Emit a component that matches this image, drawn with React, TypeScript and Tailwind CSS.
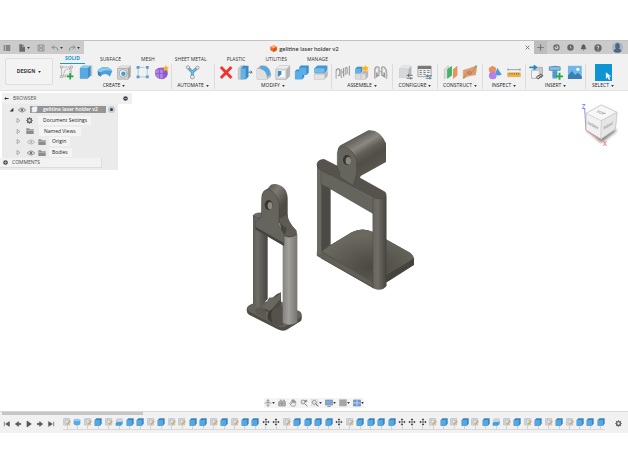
import React from "react";

type IconName =
  | "sketch" | "extrude" | "revolve" | "hole" | "pattern" | "form" | "automate"
  | "delete" | "presspull" | "fillet" | "shell" | "combine" | "split"
  | "joint" | "component" | "rigid" | "config" | "table" | "plane" | "surface"
  | "inspect" | "measure" | "link" | "fastener" | "image" | "select";

const art: Record<IconName, React.ReactNode> = {
  sketch: (
    <>
      <path d="M8 8H38V38H8Z" fill="none" stroke="#999" strokeWidth="2" />
      <path d="M14 34L18 18L34 12V32Z" fill="none" stroke="#777" strokeWidth="2" strokeDasharray="4 2" />
      <path d="M4 5h6v6H4zM36 5h6v6h-6zM4 35h6v6H4z" fill="#fff" stroke="#777" strokeWidth="1.5" />
      <path d="M35 27V47M25 37H45" stroke="#22a546" strokeWidth="5" />
    </>
  ),
  extrude: (
    <>
      <path d="M6 11L15 4H40V34L31 44H6Z" fill="#3f8fc9" />
      <path d="M6 11L15 4H40L31 11Z" fill="#8ccaf0" />
      <path d="M6 11H31V44H6Z" fill="#5aaae2" />
      <path d="M43 3V36" stroke="#999" strokeWidth="2" />
    </>
  ),
  revolve: (
    <>
      <path d="M2 22C6 3 40 3 48 20L40 38C32 27 18 27 11 38Z" fill="#4b9fda" />
      <path d="M2 21C10 5 37 4 47 20C34 16 19 17 12 25Z" fill="#8ac8ef" />
      <path d="M2 22L12 25L11 38L3 33Z" fill="#3a87bf" />
    </>
  ),
  hole: (
    <>
      <path d="M5 12L13 4H46V37L38 46H5Z" fill="#a5a5a5" />
      <path d="M5 12L13 4H46L38 12Z" fill="#e1e1e1" />
      <path d="M5 12H38V46H5Z" fill="#d2d2d2" stroke="#888" />
      <circle cx="22" cy="28" r="12" fill="#f8f8f8" stroke="#888" strokeWidth="2" />
      <circle cx="23" cy="29" r="7" fill="#489bd3" />
    </>
  ),
  pattern: (
    <>
      <path d="M10 9V39H38M10 9H30M38 39V10" fill="none" stroke="#aaa" strokeWidth="2" />
      <path d="M5 5H14V13H5ZM34 5H43V13H34ZM5 34H14V43H5ZM34 34H43V43H34Z" fill="#4f9fd8" />
    </>
  ),
  form: (
    <>
      <path d="M4 17Q15 7 31 10Q44 14 43 28Q42 43 26 46Q8 45 4 33Z" fill="#9060cf" />
      <path d="M4 18Q17 11 30 18V44Q14 45 5 36Z" fill="#b083e6" />
      <path d="M4 29Q20 26 42 30M17 14V44M30 18V44" fill="none" stroke="#7a50b5" strokeWidth="2" />
      <path d="M37 1L40 8L47 9L42 14L43 21L37 17L30 21L32 14L27 9L34 8Z" fill="#ffb31a" />
    </>
  ),
  automate: (
    <>
      <path d="M10 10L23 24L38 11M23 24V38" fill="none" stroke="#4f98c4" strokeWidth="9" />
      <path d="M10 10L23 24L38 11M23 24V38" fill="none" stroke="#6db8e6" strokeWidth="5" />
      <circle cx="9" cy="9" r="5" fill="#eee" stroke="#777" strokeWidth="2" />
      <circle cx="39" cy="10" r="5" fill="#eee" stroke="#777" strokeWidth="2" />
      <circle cx="23" cy="39" r="6" fill="#eee" stroke="#777" strokeWidth="2" />
    </>
  ),
  delete: <path d="M9 8L42 42M42 8L9 42" stroke="#ef3434" strokeWidth="9" />,
  presspull: (
    <>
      <path d="M4 12L12 4H25V38L17 46H4Z" fill="#c7cdd1" stroke="#8c9499" />
      <path d="M12 12L20 4H36V38L28 46H12Z" fill="#3a8bc3" />
      <path d="M12 12H27V46H12Z" fill="#65b2e7" />
      <path d="M35 24H47M42 19L47 24L42 29" fill="none" stroke="#555" strokeWidth="2.5" />
    </>
  ),
  fillet: (
    <>
      <path d="M3 14L14 4H26Q43 8 46 31V37L35 46H3Z" fill="#b7b7b7" stroke="#888" />
      <path d="M3 14H15Q33 17 35 46H3Z" fill="#e0e0e0" />
      <path d="M14 5H26Q42 9 46 31L35 38Q32 18 14 14Z" fill="#56a9e0" />
    </>
  ),
  shell: (
    <>
      <path d="M3 14L13 4H46V36L36 46H3Z" fill="#b5b5b5" stroke="#888" />
      <path d="M3 14L13 4H46L36 14Z" fill="#ececec" />
      <path d="M3 14H36V46H3Z" fill="#dedede" stroke="#999" />
      <path d="M9 20H30V39H9Z" fill="#fff" />
      <path d="M9 20H20V31L9 39Z" fill="#398cc5" />
    </>
  ),
  combine: (
    <>
      <path d="M16 9L21 3H46V26L39 33H32V40L26 46H3V21L8 16H16Z" fill="#388fce" />
      <path d="M16 9H39V33H26V46H3V21H16Z" fill="#5bade5" />
    </>
  ),
  split: (
    <>
      <path d="M4 12L14 3H45V17L36 27H4Z" fill="#4398d2" />
      <path d="M4 12H36V26H4Z" fill="#70bceb" />
      <path d="M4 31L10 28H36L45 20V36L36 46H4Z" fill="#b9b9b9" stroke="#999" />
      <path d="M4 31H36V46H4Z" fill="#e4e4e4" />
    </>
  ),
  joint: (
    <>
      <path d="M4 44V20Q4 14 10 14Q16 14 15 22V33L9 35" fill="none" stroke="#999" strokeWidth="4" />
      <path d="M20 42V15M27 38V11M20 26L27 21" stroke="#999" strokeWidth="4" />
      <path d="M33 33V11Q36 6 38 12V30M45 4V34" fill="none" stroke="#a5a5a5" strokeWidth="4" />
      <path d="M5 43V20M21 40V16M34 31V12" stroke="#ddd" strokeWidth="2" />
    </>
  ),
  component: (
    <>
      <path d="M4 13L10 7H26V22L20 28H4Z" fill="#3f90cb" />
      <path d="M4 13H21V27H4Z" fill="#62b2e8" />
      <path d="M4 29H22V46H4Z" fill="#ddd" stroke="#999" />
      <path d="M23 29L29 22H43V38L36 46H23Z" fill="#b7b7b7" stroke="#888" />
      <path d="M23 29H36V46H23Z" fill="#ddd" />
      <path d="M35 1L38 8L46 7L42 13L46 19L38 18L35 25L32 18L24 19L28 13L24 7L32 8Z" fill="#ffb41c" />
    </>
  ),
  rigid: (
    <>
      <path d="M6 44V17Q8 4 18 9V33L12 37V25M42 44V22Q37 4 28 9V33L35 37V25" fill="none" stroke="#999" strokeWidth="5" />
      <path d="M7 42V18Q9 6 17 10V32M41 42V22Q36 6 29 10V32" fill="none" stroke="#dcdcdc" strokeWidth="2" />
      <path d="M20 19L27 26" stroke="#999" strokeWidth="3" />
    </>
  ),
  config: (
    <>
      <path d="M4 13L14 4H42V33L34 42H4Z" fill="#b5b5b5" />
      <path d="M4 13L14 4H42L34 13Z" fill="#e6e6e6" />
      <path d="M4 13H33V42H4Z" fill="#d8d8d8" />
      <path d="M27 34H46M27 43H46M33 29V38M40 39V47" fill="none" stroke="#596772" strokeWidth="2.5" />
    </>
  ),
  table: (
    <>
      <path d="M3 5H44V38H3Z" fill="#f2f2f2" stroke="#777" strokeWidth="2" />
      <path d="M3 5H44V14H3Z" fill="#777" />
      <path d="M8 19H15M20 19H27M32 19H39M8 25H15M20 25H27M32 25H39M8 31H15M20 31H27" stroke="#777" strokeWidth="3" />
      <path d="M27 35H46M27 43H46M33 31V39M40 39V47" stroke="#506b7f" strokeWidth="2.5" />
    </>
  ),
  plane: (
    <>
      <path d="M4 15L17 4V34L4 45Z" fill="#dedede" stroke="#999" />
      <path d="M13 15L28 4V34L13 45Z" fill="#42b469" />
      <path d="M31 15L45 4V34L31 45Z" fill="#e69461" />
    </>
  ),
  surface: (
    <>
      <path d="M4 18Q20 14 45 4Q47 17 42 33Q25 33 4 43Z" fill="#e79a65" stroke="#c47b4f" />
      <path d="M5 41L18 25L29 28L44 6" fill="none" stroke="#8a8a8a" strokeWidth="2" />
      <circle cx="6" cy="41" r="3" fill="#45b869" /><circle cx="44" cy="6" r="3" fill="#45b869" />
      <circle cx="24" cy="26" r="5" fill="none" stroke="#777" strokeWidth="2" />
    </>
  ),
  inspect: (
    <>
      <path d="M32 10L46 31Q36 37 25 31Z" fill="#4c9dd6" />
      <path d="M6 11L17 4L28 10V22L17 27L6 22Z" fill="#e8915b" />
      <circle cx="18" cy="34" r="12" fill="#b083e6" />
    </>
  ),
  measure: (
    <>
      <path d="M6 16H44M6 12V20M44 12V20" stroke="#777" strokeWidth="2" />
      <path d="M5 26H45V38H5Z" fill="#efb33e" stroke="#bd892e" />
      <path d="M12 26V32M19 26V32M26 26V32M33 26V32M39 26V32" stroke="#795e31" strokeWidth="2" />
    </>
  ),
  link: (
    <>
      <path d="M8 19L20 9H42V34L34 43H8Z" fill="#c9c9c9" stroke="#999" strokeWidth="2" />
      <path d="M8 19H32V43H8Z" fill="#f3f3f3" stroke="#999" />
      <path d="M1 9H23M15 3L23 9L15 16" fill="none" stroke="#2786c6" strokeWidth="5" />
      <path d="M28 38L36 30L43 35L37 42M38 35L29 45L23 40L30 33" fill="none" stroke="#444" strokeWidth="3" />
    </>
  ),
  fastener: (
    <>
      <path d="M4 9Q20 0 38 8V19H29V44H14V19H4Z" fill="#579fce" />
      <path d="M4 7H38V18H4ZM14 26H29M14 34H29" fill="#86bfe1" stroke="#4686af" strokeWidth="2" />
      <path d="M36 26V48M25 37H47" stroke="#24a947" strokeWidth="6" />
    </>
  ),
  image: (
    <>
      <path d="M3 4H46V45H3Z" fill="#6fb9ea" />
      <path d="M3 34L15 20L26 33L34 26L46 37V45H3Z" fill="#377fb5" />
      <circle cx="34" cy="15" r="5" fill="#fff" />
    </>
  ),
  select: (
    <>
      <path d="M0 0H50V50H0Z" fill="#0c93d8" />
      <path d="M4 5H44V30H4Z" fill="none" stroke="#2fae8c" strokeWidth="1.5" strokeDasharray="3 2" />
      <path d="M32 24V44L37 39L41 47L45 45L41 37H48Z" fill="#fff" />
    </>
  ),
};

const groups: { label: string; icons: IconName[] }[] = [
  { label: "CREATE", icons: ["sketch", "extrude", "revolve", "hole", "pattern", "form"] },
  { label: "AUTOMATE", icons: ["automate"] },
  { label: "MODIFY", icons: ["delete", "presspull", "fillet", "shell", "combine", "split"] },
  { label: "ASSEMBLE", icons: ["joint", "component", "rigid"] },
  { label: "CONFIGURE", icons: ["config", "table"] },
  { label: "CONSTRUCT", icons: ["plane", "surface"] },
  { label: "INSPECT", icons: ["inspect", "measure"] },
  { label: "INSERT", icons: ["link", "fastener", "image"] },
  { label: "SELECT", icons: ["select"] },
];

const tabs = ["SOLID", "SURFACE", "MESH", "SHEET METAL", "PLASTIC", "UTILITIES", "MANAGE"];

function Caret() {
  return (
    <svg viewBox="0 0 4 3" className="h-[2px] w-[3px] shrink-0" aria-hidden="true">
      <path d="M0 0H4L2 3Z" fill="#333" />
    </svg>
  );
}

function Glyph({ children, size = "size-2" }: { children: React.ReactNode; size?: string }) {
  return (
    <svg viewBox="0 0 24 24" className={`${size} shrink-0`} aria-hidden="true">
      {children}
    </svg>
  );
}

function Gear() {
  return (
    <Glyph size="size-[7px]">
      <circle cx="12" cy="12" r="6.5" fill="none" stroke="#6a6a6a" strokeWidth="5" />
      <path d="M12 1V5M12 19V23M1 12H5M19 12H23M4 4L7 7M17 17L20 20M20 4L17 7M4 20L7 17" stroke="#6a6a6a" strokeWidth="4" />
    </Glyph>
  );
}

function TitleBar() {
  return (
    <div className="flex h-[14px] border-t border-[#c2c2c2] bg-[#cbcbcb]">
      <div className="flex w-[84px] shrink-0 items-center pl-[3px]">
        <button aria-label="Data panel" className="mr-[7px]">
          <Glyph><path d="M2 4H7V8H2ZM9 4H22V8H9ZM2 10H7V14H2ZM9 10H22V14H9ZM2 16H7V20H2ZM9 16H22V20H9Z" fill="#707070" /></Glyph>
        </button>
        <button aria-label="File" className="mr-[7px] flex items-center gap-px">
          <Glyph><path d="M4 1H14L21 8V23H4Z" fill="#6b6b6b" /><path d="M14 1V8H21" stroke="#ccc" fill="none" strokeWidth="2" /></Glyph>
          <Caret />
        </button>
        <button aria-label="Save" className="mr-[6px]">
          <Glyph><path d="M3 3H21V21H3ZM7 3V10H17V3M7 21V14H17V21" stroke="#8c8c8c" strokeWidth="2.5" fill="none" /></Glyph>
        </button>
        <button aria-label="Undo" className="mr-[5px] flex items-center gap-px">
          <Glyph><path d="M9 4L3 10L9 16M3 10H14Q21 11 20 20" stroke="#8e8e8e" strokeWidth="3" fill="none" /></Glyph>
          <Caret />
        </button>
        <button aria-label="Redo" className="flex items-center gap-px">
          <Glyph><path d="M15 4L21 10L15 16M21 10H10Q3 11 4 20" stroke="#8e8e8e" strokeWidth="3" fill="none" /></Glyph>
          <Caret />
        </button>
      </div>
      <div className="flex flex-1 items-center bg-[#f1f1f1] pr-1">
        <div className="flex flex-1 items-center justify-center gap-[2px] pt-[2px] font-['Lato','Open_Sans',sans-serif] text-[6px] leading-[8px] font-medium text-[#333]">
          <svg viewBox="0 0 24 24" className="size-[7px]" aria-hidden="true">
            <path d="M1 6L13 1L23 6V18L12 24L1 18Z" fill="#ef6a28" />
            <path d="M1 6L13 1L23 6L12 12Z" fill="#ffac70" />
            <path d="M12 12L23 6V18L12 24Z" fill="#d95216" />
          </svg>
          <h1>gelitine laser holder v2</h1>
        </div>
        <button aria-label="Close tab">
          <Glyph size="size-[5px]"><path d="M3 3L21 21M21 3L3 21" stroke="#666" strokeWidth="4" /></Glyph>
        </button>
      </div>
      <div className="flex w-[94px] shrink-0 items-center justify-between pr-[5px]">
        <button aria-label="New tab" className="flex h-full w-[13px] items-center justify-center bg-[#bdbdbd]">
          <Glyph size="size-[7px]"><path d="M12 1V23M1 12H23" stroke="#777" strokeWidth="4" /></Glyph>
        </button>
        <button aria-label="Extensions"><Glyph size="size-[7px]"><circle cx="12" cy="12" r="9" fill="none" stroke="#666" strokeWidth="4" /><path d="M3 8H12V14" fill="none" stroke="#666" strokeWidth="3" /></Glyph></button>
        <button aria-label="Job status"><Glyph size="size-[7px]"><circle cx="12" cy="12" r="11" fill="#666" /><path d="M12 6V13H17" fill="none" stroke="#ccc" strokeWidth="2.5" /></Glyph></button>
        <button aria-label="Notifications"><Glyph size="size-[7px]"><path d="M2 18Q5 15 5 9Q6 2 12 1Q18 2 19 9Q19 15 22 18ZM9 20H15L12 23Z" fill="#5c5c5c" /></Glyph></button>
        <button aria-label="Help"><Glyph><circle cx="12" cy="12" r="11" fill="#666" /><path d="M8 9Q9 5 13 6Q17 8 12 13V15M12 17V20" fill="none" stroke="#ddd" strokeWidth="2.5" /></Glyph></button>
        <button aria-label="Account" className="ml-1">
          <Glyph size="size-[11px]"><circle cx="12" cy="12" r="12" fill="#a9b5c3" /><ellipse cx="12" cy="9" rx="5" ry="7" fill="#4e6684" /><path d="M3 20Q5 14 12 15Q19 14 21 20Q12 27 3 20Z" fill="#4e6684" /></Glyph>
        </button>
      </div>
    </div>
  );
}

function Ribbon() {
  return (
    <div className="flex h-[37px] border-b border-[#e2e2e2] bg-[#f1f1f1]">
      <div className="w-[57px] shrink-0 pt-1 pl-[5px]">
        <button className="flex h-[27px] w-12 items-center justify-center gap-[3px] rounded-[2px] border border-[#dedede] bg-[#f3f3f3] text-[5px] font-bold text-[#333]">
          DESIGN <Caret />
        </button>
      </div>
      <div className="flex-1">
        <nav className="flex h-[10px] items-start gap-5 pl-2" aria-label="Workspace tabs">
          {tabs.map((t, i) => (
            <button
              key={t}
              className={
                i === 0
                  ? "-mx-[5px] h-[10px] border-b border-[#1c98d8] px-[5px] text-[5px] leading-[9px] font-bold text-[#1694d6]"
                  : "h-[10px] text-[5px] leading-[9px] font-medium text-[#333]"
              }
            >
              {t}
            </button>
          ))}
        </nav>
        <div className="grid grid-cols-[115fr_43fr_117fr_61fr_45fr_45fr_43fr_60fr_34fr] pr-2">
          {groups.map((g) => (
            <section key={g.label} className="flex h-[25px] flex-col items-center border-r border-[#dcdcdc] last:border-r-0">
              <div className="flex gap-[3px]">
                {g.icons.map((n) => (
                  <button key={n} aria-label={n}>
                    <svg viewBox="0 0 50 50" className={n === "select" ? "h-[17px] w-[17px]" : "h-[17px] w-4"} aria-hidden="true">{art[n]}</svg>
                  </button>
                ))}
              </div>
              <button className="flex items-center gap-[2px] text-[5px] leading-[9px] font-medium whitespace-nowrap text-[#222]">
                {g.label} <Caret />
              </button>
            </section>
          ))}
        </div>
      </div>
    </div>
  );
}

function Folder() {
  return <Glyph><path d="M1 4H9L11 7H23V21H1Z" fill="#8c8c8c" /><path d="M1 10H23" stroke="#ccc" strokeWidth="2" /></Glyph>;
}

function Eye({ dim = false }: { dim?: boolean }) {
  return (
    <Glyph>
      <path d="M1 12Q12 0 23 12Q12 24 1 12Z" fill="none" stroke={dim ? "#aaa" : "#777"} strokeWidth="2.5" />
      <circle cx="12" cy="12" r="4" fill={dim ? "#bbb" : "#777"} />
    </Glyph>
  );
}

function Twist() {
  return <Glyph size="size-[5px]"><path d="M5 2L19 12L5 22Z" fill="none" stroke="#888" strokeWidth="3" /></Glyph>;
}

function Browser() {
  return (
    <aside className="w-[132px] text-[5px] leading-[9px] font-medium text-[#222]">
      <header className="ml-[2px] flex h-[11px] items-center bg-[#f0f0f0] pr-1 pl-[2px]">
        <Glyph size="size-[5px]"><path d="M1 12L10 5V19ZM9 10H22V14H9Z" fill="#333" /></Glyph>
        <h2 className="ml-1 flex-1 text-[#555]">BROWSER</h2>
        <Glyph size="size-[5px]"><circle cx="12" cy="12" r="11" fill="#444" /><path d="M6 12H18" stroke="#ccc" strokeWidth="3" /></Glyph>
      </header>
      <div className="ml-[2px] w-[116px] bg-[#ebebeb] pt-px pb-px">
        <ul className="flex h-[52px] flex-col justify-between">
          <li className="flex h-[9px] items-center gap-1 pl-[7px]">
            <Glyph size="size-[5px]"><path d="M21 3V21H3Z" fill="#333" /></Glyph>
            <Eye />
            <span className="flex h-[7px] w-[76px] items-center gap-[5px] bg-[#959595] pl-px font-semibold text-white">
              <Glyph size="size-[7px]"><path d="M3 6L8 2H21V17L16 21H3Z" fill="#eef2f6" stroke="#ccd" strokeWidth="1" /></Glyph>
              gelitine laser holder v2
            </span>
            <input type="radio" aria-label="Activate component" defaultChecked className="-ml-[2px] size-[7px] appearance-none rounded-full border-2 border-[#c3cad1] bg-[#2e4359]" />
          </li>
          <li className="flex h-[9px] items-center gap-[5px] pl-[14px]">
            <Twist /><Gear /><span className="bg-[#f4f4f4] pr-1 pl-[5px]">Document Settings</span>
          </li>
          <li className="flex h-[9px] items-center gap-[5px] pl-[14px]">
            <Twist /><Folder /><span className="bg-[#f4f4f4] px-[5px]">Named Views</span>
          </li>
          <li className="flex h-[9px] items-center gap-[3px] pl-[14px]">
            <Twist /><span className="-mr-px w-px" /><Eye dim /><Folder /><span className="bg-[#f4f4f4] pr-1 pl-[3px]">Origin</span>
          </li>
          <li className="flex h-[9px] items-center gap-[3px] pl-[14px]">
            <Twist /><span className="-mr-px w-px" /><Eye /><Folder /><span className="bg-[#f4f4f4] pr-1 pl-[3px]">Bodies</span>
          </li>
        </ul>
      </div>
      <div className="h-3 w-[118px] bg-[#ebebeb]">
        <button className="flex h-[10px] w-[102px] items-center gap-1 border-r border-b border-[#ddd] bg-[#f2f2f2] pl-[3px] text-[#444]">
          <Glyph size="size-[5px]"><circle cx="12" cy="12" r="11" fill="#444" /><path d="M6 12H18M12 6V18" stroke="#ccc" strokeWidth="3" /></Glyph>
          COMMENTS
        </button>
      </div>
    </aside>
  );
}

function LeftModel() {
  return (
    <svg viewBox="0 0 240 495" className="absolute top-[84px] left-[235px] h-[165px] w-[80px]" aria-label="Clamp bracket body">
      <defs>
        <linearGradient id="colDark"><stop offset="0" stopColor="#5b5a55" /><stop offset=".3" stopColor="#6f6d68" /><stop offset="1" stopColor="#45443e" /></linearGradient>
        <linearGradient id="colLight"><stop offset="0" stopColor="#83827d" /><stop offset=".4" stopColor="#a09f9b" /><stop offset="1" stopColor="#76756f" /></linearGradient>
        <linearGradient id="lugSide" gradientUnits="userSpaceOnUse" x1="95" y1="30" x2="155" y2="75"><stop offset="0" stopColor="#55534c" /><stop offset=".45" stopColor="#7d7a72" /><stop offset="1" stopColor="#4d4b44" /></linearGradient>
      </defs>
      <path d="M35 402Q38 390 58 385L120 378L196 412Q204 422 198 438L154 465Q142 470 128 463L42 419Q34 414 35 402Z" fill="#4f4d47" />
      <path d="M36 400Q40 389 60 384L130 375L196 410Q204 420 194 428L152 454Q140 460 128 453L42 409Z" fill="#66635c" />
      <path d="M72 402L126 357L138 352V392L107 420Q96 405 72 402Z" fill="#4c4a45" />
      <path d="M72 402Q92 390 102 368L122 366L137 353V372L105 408Q90 397 72 402Z" fill="#6a6760" />
      <path d="M60 405Q75 392 90 406Q96 416 93 432L64 416Z" fill="#5b5952" />
      <path d="M96 435Q98 415 118 402L145 390V452L128 452Z" fill="#55524b" />
      <path d="M98 430Q95 412 113 402Q105 415 112 445Z" fill="#3d3b37" />
      <path d="M54 122Q76 106 98 125V372L75 395Q62 398 54 387Z" fill="url(#colDark)" />
      <path d="M54 122Q60 112 80 114V130Q62 132 54 122Z" fill="#6e6b64" stroke="#3d3b37" strokeWidth="1.5" />
      <path d="M143 176H187V442Q167 456 143 443Z" fill="url(#colLight)" />
      <path d="M80 60L108 29Q126 22 146 38Q158 50 158 70V124L134 146Z" fill="url(#lugSide)" />
      <path d="M133 132L158 118Q158 140 184 166Q190 178 176 184Q160 190 147 181L138 170Z" fill="#5d5b54" />
      <path d="M136 142Q140 152 153 158Q158 162 150 178L140 172Z" fill="#48463f" />
      <path d="M80 68Q82 42 102 43Q124 54 132 84V132Q130 154 147 178V212L62 163V138Q78 134 79 118Z" fill="#65655d" stroke="#45443e" strokeWidth="1.5" />
      <path d="M62 163L147 212V204L62 156Z" fill="#45443e" />
      <path d="M147 182Q167 192 186 177" fill="none" stroke="#403e39" strokeWidth="2" />
      <ellipse cx="101" cy="90" rx="12" ry="15" fill="#37352f" /><ellipse cx="105" cy="92" rx="7" ry="11" fill="#8b8980" />
    </svg>
  );
}

function RightModel() {
  return (
    <svg viewBox="0 0 360 540" className="absolute top-[29px] left-[305px] h-[180px] w-[120px]" aria-label="Frame body">
      <defs>
        <linearGradient id="tube" gradientUnits="userSpaceOnUse" x1="150" y1="50" x2="204" y2="142"><stop offset="0" stopColor="#5c5a54" /><stop offset=".3" stopColor="#8a8880" /><stop offset=".5" stopColor="#605e57" /><stop offset=".72" stopColor="#504e47" /><stop offset="1" stopColor="#57554d" /></linearGradient>
        <linearGradient id="post"><stop offset="0" stopColor="#64635c" /><stop offset=".35" stopColor="#706e67" /><stop offset="1" stopColor="#47453f" /></linearGradient>
        <radialGradient id="plate" cx=".55" cy=".7" r=".6"><stop offset="0" stopColor="#4a4842" /><stop offset="1" stopColor="#6b6860" /></radialGradient>
      </defs>
      <path d="M48 392L140 337Q172 320 204 336L315 398Q327 408 327 418V435L248 485L205 505L48 415Z" fill="#45433d" />
      <path d="M48 394L140 337Q172 320 204 336L315 398Q334 412 314 423L236 470L205 490Z" fill="url(#plate)" />
      <path d="M48 394L205 487V503L36 407V395Z" fill="#605f58" stroke="#45433d" strokeWidth="1" />
      <path d="M48 150L77 160V375L48 396Z" fill="#4c4a44" />
      <path d="M36 132L49 140V401L36 405Z" fill="#6a6962" />
      <path d="M36 135Q35 120 57 118L104 142L148 168L165 174L240 216Q249 228 235 236Q222 241 205 235L45 149Q37 144 36 135Z" fill="#55534c" stroke="#45433d" strokeWidth="1.5" />
      <path d="M48 151L205 236V281L77 207L48 193Z" fill="#65655d" stroke="#4a4943" strokeWidth="1.5" />
      <path d="M203 234Q224 244 244 228V498Q230 516 204 504Z" fill="url(#post)" stroke="#45433d" strokeWidth="1" />
      <path d="M98 90Q99 79 112 73L190 31Q224 27 243 70V126L167 168L154 186Z" fill="url(#tube)" />
      <path d="M155 162L168 166Q160 178 169 183L146 197Q154 180 155 160Z" fill="#55534c" />
      <path d="M97 99Q99 80 119 81Q145 89 155 122V160Q151 175 145 197L104 171Q108 159 97 143Z" fill="#65655d" stroke="#45433d" strokeWidth="1.5" />
      <ellipse cx="126" cy="120" rx="12" ry="15" fill="#38362f" /><ellipse cx="130" cy="122" rx="8" ry="11" fill="#8b8980" />
    </svg>
  );
}

function ViewCube() {
  return (
    <svg viewBox="0 0 174 180" className="h-[60px] w-[58px]" aria-label="View cube">
      <defs><filter id="soft"><feGaussianBlur stdDeviation="5" /></filter></defs>
      <path d="M50 112L94 150L142 112L92 95Z" fill="#888" filter="url(#soft)" />
      <path d="M44 46L48 112" fill="none" stroke="#8c8cf0" strokeWidth="3" />
      <path d="M48 61L94 36L141 58L136 108L92 138L48 111Z" fill="#f1f1f1" stroke="#bcbcbc" strokeWidth="2" />
      <path d="M48 61L94 36L141 58L94 83Z" fill="#f7f7f7" stroke="#c4c4c4" strokeWidth="2" />
      <path d="M94 83L141 58L136 108L92 138Z" fill="#e6e6e6" stroke="#c4c4c4" strokeWidth="2" />
      <path d="M48 113L98 142" stroke="#f08a8a" strokeWidth="3" />
      <g fontSize="13" fontWeight="700" fill="#999" textAnchor="middle">
        <text transform="matrix(1 .3 -.6 .6 90 62)">TOP</text>
        <text transform="matrix(.8 .45 0 1 69 102)" fontSize="12">FRONT</text>
        <text transform="matrix(.8 -.45 0 1 115 102)" fontSize="12">RIGHT</text>
      </g>
      <text x="35" y="47" fontSize="19" fontWeight="600" fill="#7a7af0">Z</text>
      <text x="99" y="158" fontSize="19" fontWeight="600" fill="#f07070">X</text>
    </svg>
  );
}

const navTools: { name: string; menu: boolean; art: React.ReactNode }[] = [
  { name: "Orbit", menu: true, art: <path d="M12 2V22M7 7L12 2L17 7M2 13Q12 7 22 13M7 17L12 22L17 17" fill="none" stroke="#888" strokeWidth="2.5" /> },
  { name: "Look at", menu: false, art: <path d="M2 8H22V21H2ZM5 3H10V8M14 3H19V8M12 8V21M2 14H22" fill="#bbb" stroke="#888" strokeWidth="2" /> },
  { name: "Pan", menu: false, art: <path d="M7 21L2 12L5 11L8 14V4H11V11V2H14V11V4H17V12V7H20V16L17 22Z" fill="#eee" stroke="#888" strokeWidth="2" /> },
  { name: "Zoom", menu: false, art: <><circle cx="9" cy="9" r="6" fill="#dce9f0" stroke="#888" strokeWidth="2.5" /><path d="M14 14L22 22M18 2V10M14 6H22" stroke="#666" strokeWidth="2.5" /></> },
  { name: "Fit", menu: true, art: <><path d="M1 1H20V20H1Z" fill="none" stroke="#bbb" strokeWidth="2" strokeDasharray="3 2" /><circle cx="10" cy="10" r="6" fill="#dce9f0" stroke="#888" strokeWidth="2.5" /><path d="M14 14L22 22" stroke="#666" strokeWidth="3" /></> },
  { name: "Display", menu: true, art: <><path d="M1 3H23V18H1Z" fill="#7ba9da" stroke="#888" strokeWidth="2" /><path d="M7 22H17" stroke="#888" strokeWidth="3" /></> },
  { name: "Grid", menu: true, art: <path d="M1 2H23V21H1Z" fill="#a5a5a5" stroke="#b5b5b5" strokeWidth="2" /> },
  { name: "Viewports", menu: true, art: <><path d="M1 3H23V21H1Z" fill="#6a9dd6" stroke="#7b8ba0" strokeWidth="2" /><path d="M12 3V21M1 12H23" stroke="#dce7f4" strokeWidth="2" /></> },
];

function Canvas() {
  return (
    <main className="relative flex h-[320px] flex-col bg-white">
      <LeftModel />
      <RightModel />
      <div className="flex flex-1 items-start justify-between pt-[2px]">
        <Browser />
        <ViewCube />
      </div>
      <div className="mb-[3px] flex h-[10px] items-center gap-[3px] self-center bg-[#f4f4f4]">
        {navTools.map((t) => (
          <button key={t.name} aria-label={t.name} className="flex items-center">
            <Glyph>{t.art}</Glyph>
            {t.menu && <Caret />}
          </button>
        ))}
      </div>
    </main>
  );
}

const features = "scsbshbbsbssbbsbsbbmmsbbbbmsbbbbmmmsbsbsbhsbsbsbsbbb";

function Feature({ kind }: { kind: string }) {
  return (
    <Glyph>
      {kind === "s" && <><path d="M2 2H20V21H2Z" fill="#dfe4e8" stroke="#a9b3ba" strokeWidth="2" /><path d="M6 6H16V16H6Z" fill="none" stroke="#7f9db2" strokeWidth="2" strokeDasharray="3 2" /><path d="M11 20L22 9" stroke="#f0a04a" strokeWidth="4" /></>}
      {kind === "b" && <><path d="M2 6L7 1H23V17L18 23H2Z" fill="#3984bd" /><path d="M2 6H18V23H2Z" fill="#54a7e0" /></>}
      {kind === "c" && <><path d="M2 6V19Q12 26 22 19V6Z" fill="#58a9e0" /><ellipse cx="12" cy="6" rx="10" ry="4" fill="#8fcaf0" /></>}
      {kind === "h" && <><path d="M2 6L7 1H23V8L18 12H2Z" fill="#c5d5e0" /><path d="M2 15L5 12H18L23 8V18L18 23H2Z" fill="#4b9fd9" /></>}
      {kind === "m" && <><path d="M12 3V21M3 12H21" stroke="#777" strokeWidth="3" /><path d="M12 1L16 6H8ZM12 23L8 18H16ZM1 12L6 8V16ZM23 12L18 16V8Z" fill="#444" /></>}
    </Glyph>
  );
}

const playback = [
  { name: "Go to start", d: "M4 5V19M19 5L8 12L19 19Z" },
  { name: "Step back", d: "M13 5L4 12L13 19ZM14 10H20V14H14Z" },
  { name: "Play", d: "M6 3L19 12L6 21Z" },
  { name: "Step forward", d: "M11 5L20 12L11 19ZM4 10H10V14H4Z" },
  { name: "Go to end", d: "M20 5V19M5 5L16 12L5 19Z" },
];

function Timeline() {
  return (
    <footer className="h-[22px] border-t border-[#d7d7d7] bg-[#f1f1f1]">
      <div className="h-[4px] pl-[2px]"><div className="h-[3px] w-[22.5%] bg-[#c5c5c5]" /></div>
      <div className="flex">
        <div className="flex w-[63px] shrink-0 items-center justify-between pt-[2px] pr-2 pl-[3px]">
          {playback.map((p) => (
            <button key={p.name} aria-label={p.name}>
              <Glyph><path d={p.d} fill="#555" stroke="#555" strokeWidth="2" /></Glyph>
            </button>
          ))}
        </div>
        <ol className="flex h-[14px] flex-1 justify-between border-b border-[#d9d9d9]">
          {features.split("").map((k, i) => (
            <li key={i} className="flex flex-col items-center pt-[2px]">
              <Feature kind={k} />
              <span className="h-1 w-px bg-[#d2d2d2]" />
            </li>
          ))}
        </ol>
        <button aria-label="Timeline settings" className="w-[23px] shrink-0 pt-px pl-[10px]"><Gear /></button>
      </div>
    </footer>
  );
}

export default function App() {
  return (
    <div className="min-h-screen bg-white pt-10 font-['Open_Sans','Noto_Sans',sans-serif]">
      <TitleBar />
      <Ribbon />
      <Canvas />
      <Timeline />
    </div>
  );
}
